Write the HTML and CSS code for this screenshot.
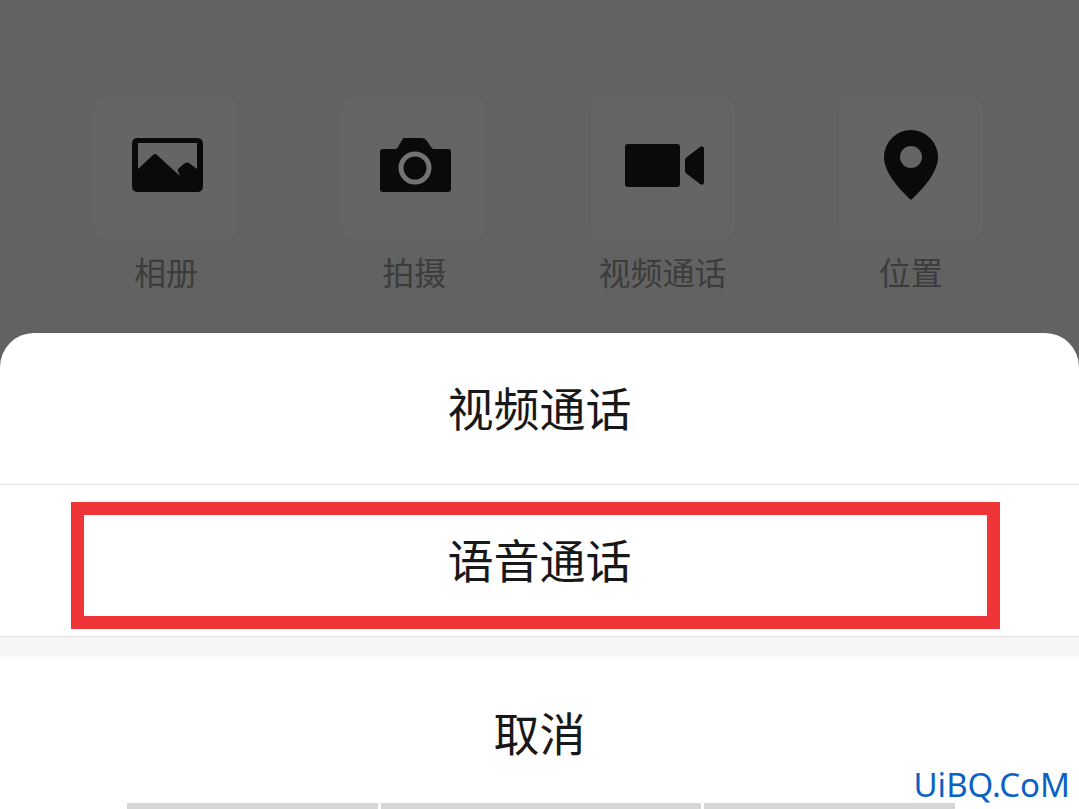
FILE: index.html
```html
<!DOCTYPE html>
<html lang="zh-CN">
<head>
    <meta charset="UTF-8">
    <meta name="viewport" content="width=device-width, initial-scale=1.0">
    <title>视频通话</title>
    <link rel="stylesheet" href="styles.css">
</head>
<body>
    <div class="tools">
        <button type="button" class="tool">
            <span class="tile">
                <svg width="80" height="80" viewBox="0 0 80 80">
                    <path fill-rule="evenodd" d="M11 13h60q6 0 6 6v42q0 6-6 6H12q-6 0-6-6V19q0-6 5-6zM12 18v26l15-14q2-2 4 0l23 21-2-5q-1-2 1-3l6-5q2-1 4 0l8 6V18z"/>
                </svg>
            </span>
            <span class="label">相册</span>
        </button>
        <button type="button" class="tool">
            <span class="tile">
                <svg width="80" height="80" viewBox="0 0 80 80">
                    <path d="M30 13h18q3 0 5 3l4 6q1 2 3 2h14q3 0 3 3v37q0 3-3 3H9q-3 0-3-3V27q0-3 3-3h12q2 0 3-2l4-7q1-2 2-2z"/>
                    <circle class="lens" cx="41" cy="43" r="14"/>
                </svg>
            </span>
            <span class="label">拍摄</span>
        </button>
        <button type="button" class="tool">
            <span class="tile">
                <svg width="80" height="80" viewBox="0 0 80 80">
                    <rect x="2" y="19" width="55" height="43" rx="3"/>
                    <path d="M62 35q0-2 2-3l13-10q4-2 4 2v33q0 4-4 2L64 49q-2-1-2-3z"/>
                </svg>
            </span>
            <span class="label">视频通话</span>
        </button>
        <button type="button" class="tool">
            <span class="tile">
                <svg width="80" height="80" viewBox="0 0 80 80">
                    <path fill-rule="evenodd" d="M40 5a27 27 0 0 1 27 27c0 15-14 31-27 43C27 63 13 47 13 32A27 27 0 0 1 40 5zm0 16a11 11 0 1 0 0 22 11 11 0 1 0 0-22z"/>
                </svg>
            </span>
            <span class="label">位置</span>
        </button>
    </div>

    <div class="sheet">
        <button type="button" class="option">视频通话</button>
        <button type="button" class="option highlighted">语音通话</button>
        <div class="divider"></div>
        <button type="button" class="cancel">取消</button>
        <div class="bars">
            <span class="bar"></span>
            <span class="bar bar-wide"></span>
            <span class="bar"></span>
        </div>
    </div>

    <div class="watermark">UiBQ.CoM</div>
</body>
</html>
```

FILE: styles.css
```css
* {
    margin: 0;
    padding: 0;
    box-sizing: border-box;
}

body {
    position: relative;
    min-height: 100vh;
    background-color: #626262;
    font-family: 'Noto Sans CJK SC', sans-serif;
}

button {
    border: none;
    background: none;
    font-family: inherit;
    cursor: pointer;
}

/* Tool panel */
.tools {
    display: grid;
    grid-template-columns: repeat(4, 1fr);
    padding: 96px 44px 38px 42px;
}

.tool {
    display: flex;
    flex-direction: column;
    align-items: center;
    gap: 7px;
}

.tile {
    display: flex;
    justify-content: center;
    align-items: center;
    width: 144px;
    height: 144px;
    padding-bottom: 6px;
    border-radius: 16px;
    background-color: #656565;
}

.tile svg {
    fill: #0a0a0a;
    overflow: visible;
}

.tile .lens {
    fill: none;
    stroke: #737373;
    stroke-width: 5;
}

.label {
    font-size: 32px;
    font-weight: 400;
    line-height: 48px;
    color: #3c3c3c;
    white-space: nowrap;
}

/* Action sheet */
.sheet {
    display: flex;
    flex-direction: column;
    border-radius: 34px 34px 0 0;
    background-color: #fff;
    overflow: hidden;
}

.option, .cancel {
    font-size: 46px;
    line-height: 68px;
    color: #181818;
}

.option {
    position: relative;
    padding: 39px 0 44px;
    border-bottom: 1px solid #e2e2e2;
}

.highlighted::after {
    content: '';
    position: absolute;
    inset: 17px 79px 7px 71px;
    border: 13px solid #f03539;
}

.divider {
    height: 24px;
    background: linear-gradient(#f6f6f6 70%, #fff);
}

.cancel {
    padding: 36px 0 38px;
}

.bars {
    display: flex;
    gap: 3px;
    padding: 0 124px 0 127px;
}

.bar {
    flex: 25;
    height: 6px;
    background-color: #d6d6d6;
}

.bar-wide {
    flex: 32;
}

.watermark {
    position: absolute;
    right: 9px;
    bottom: 4px;
    font-family: 'Noto Sans', sans-serif;
    font-size: 33px;
    line-height: 40px;
    color: #0b62c4;
}
```
